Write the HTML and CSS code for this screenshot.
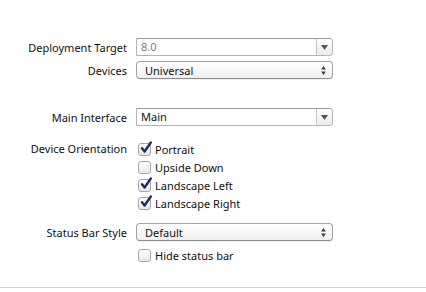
FILE: index.html
```html
<!DOCTYPE html>
<html lang="en">
<head>
    <meta charset="UTF-8">
    <title>Deployment Info</title>
    <link rel="stylesheet" href="styles.css">
</head>
<body>
    <div class="panel">
        <div class="form">
            <div class="row">
                <span class="label">Deployment Target</span>
                <div class="combo">
                    <span class="combo-value muted">8.0</span>
                    <span class="combo-btn">
                        <svg width="7" height="5" viewBox="0 0 7 5"><path d="M0 0h7L3.5 5z" fill="#555"/></svg>
                    </span>
                </div>
            </div>
            <div class="row">
                <span class="label">Devices</span>
                <div class="popup">
                    <span class="popup-value">Universal</span>
                    <svg class="updown" width="5" height="9" viewBox="0 0 5 9"><path d="M2.5 0L5 3.5H0z M2.5 9L0 5.5h5z" fill="#444"/></svg>
                </div>
            </div>

            <div class="row spaced">
                <span class="label">Main Interface</span>
                <div class="combo">
                    <span class="combo-value">Main</span>
                    <span class="combo-btn">
                        <svg width="7" height="5" viewBox="0 0 7 5"><path d="M0 0h7L3.5 5z" fill="#555"/></svg>
                    </span>
                </div>
            </div>

            <div class="row top">
                <span class="label">Device Orientation</span>
                <div class="checks">
                    <label class="check"><span class="box on"><svg width="14" height="14" viewBox="0 0 14 14"><path d="M3 7.2l2.6 3.3L11.8 1.5" fill="none" stroke="#1c2f5e" stroke-width="2.4" stroke-linecap="round" stroke-linejoin="round"/></svg></span>Portrait</label>
                    <label class="check"><span class="box"></span>Upside Down</label>
                    <label class="check"><span class="box on"><svg width="14" height="14" viewBox="0 0 14 14"><path d="M3 7.2l2.6 3.3L11.8 1.5" fill="none" stroke="#1c2f5e" stroke-width="2.4" stroke-linecap="round" stroke-linejoin="round"/></svg></span>Landscape Left</label>
                    <label class="check"><span class="box on"><svg width="14" height="14" viewBox="0 0 14 14"><path d="M3 7.2l2.6 3.3L11.8 1.5" fill="none" stroke="#1c2f5e" stroke-width="2.4" stroke-linecap="round" stroke-linejoin="round"/></svg></span>Landscape Right</label>
                </div>
            </div>

            <div class="row status">
                <span class="label">Status Bar Style</span>
                <div class="popup">
                    <span class="popup-value">Default</span>
                    <svg class="updown" width="5" height="9" viewBox="0 0 5 9"><path d="M2.5 0L5 3.5H0z M2.5 9L0 5.5h5z" fill="#444"/></svg>
                </div>
            </div>
            <div class="row">
                <span class="label"></span>
                <label class="check"><span class="box"></span>Hide status bar</label>
            </div>
        </div>
        <div class="divider"></div>
    </div>
</body>
</html>
```

FILE: styles.css
```css
* {
    margin: 0;
    padding: 0;
    box-sizing: border-box;
}

body {
    background: #fff;
    color: #111;
    font-family: "Noto Sans", "DejaVu Sans", sans-serif;
    font-size: 11px;
}

.panel {
    width: 426px;
    height: 292px;
    padding-top: 38px;
}

.form {
    display: flex;
    flex-direction: column;
    gap: 5px;
}

.row {
    display: grid;
    grid-template-columns: 127px 197px;
    column-gap: 9px;
    align-items: center;
}

.row.spaced {
    margin-top: 24px;
}

.row.top {
    margin-top: 9px;
    align-items: start;
}

.row.top .label {
    line-height: 18px;
}

.row.status {
    margin-top: 6px;
}

.label {
    text-align: right;
    white-space: nowrap;
}

.combo {
    height: 18px;
    display: flex;
    border: 1px solid #b4b4b4;
    border-top-color: #9a9a9a;
    border-radius: 0 4px 4px 0;
    background: #fff;
}

.combo-value {
    flex: 1;
    padding-left: 4px;
    line-height: 16px;
}

.muted {
    color: #7b7b7b;
}

.combo-btn {
    width: 16px;
    border-left: 1px solid #c4c4c4;
    display: flex;
    align-items: center;
    justify-content: center;
    background: linear-gradient(#fdfdfd, #ececec);
    border-radius: 0 3px 3px 0;
}

.popup {
    height: 18px;
    display: flex;
    align-items: center;
    border: 1px solid #a2a2a2;
    border-bottom-color: #8c8c8c;
    border-radius: 4px;
    background: linear-gradient(#ffffff, #f0f0f0);
    box-shadow: 0 1px 0 rgba(0, 0, 0, 0.06);
    padding: 0 6px 0 8px;
}

.popup-value {
    flex: 1;
}

.checks {
    display: flex;
    flex-direction: column;
}

.check {
    display: flex;
    align-items: center;
    gap: 4px;
    height: 18px;
    padding-left: 2px;
}

.box {
    position: relative;
    width: 13px;
    height: 13px;
    border: 1px solid #a6a6a6;
    border-radius: 3px;
    background: linear-gradient(#fdfdfd, #e8e8e8);
}

.box svg {
    position: absolute;
    left: 0;
    top: -3px;
}

.divider {
    height: 1px;
    background: #d4d4d4;
    margin-top: 23px;
}
```
